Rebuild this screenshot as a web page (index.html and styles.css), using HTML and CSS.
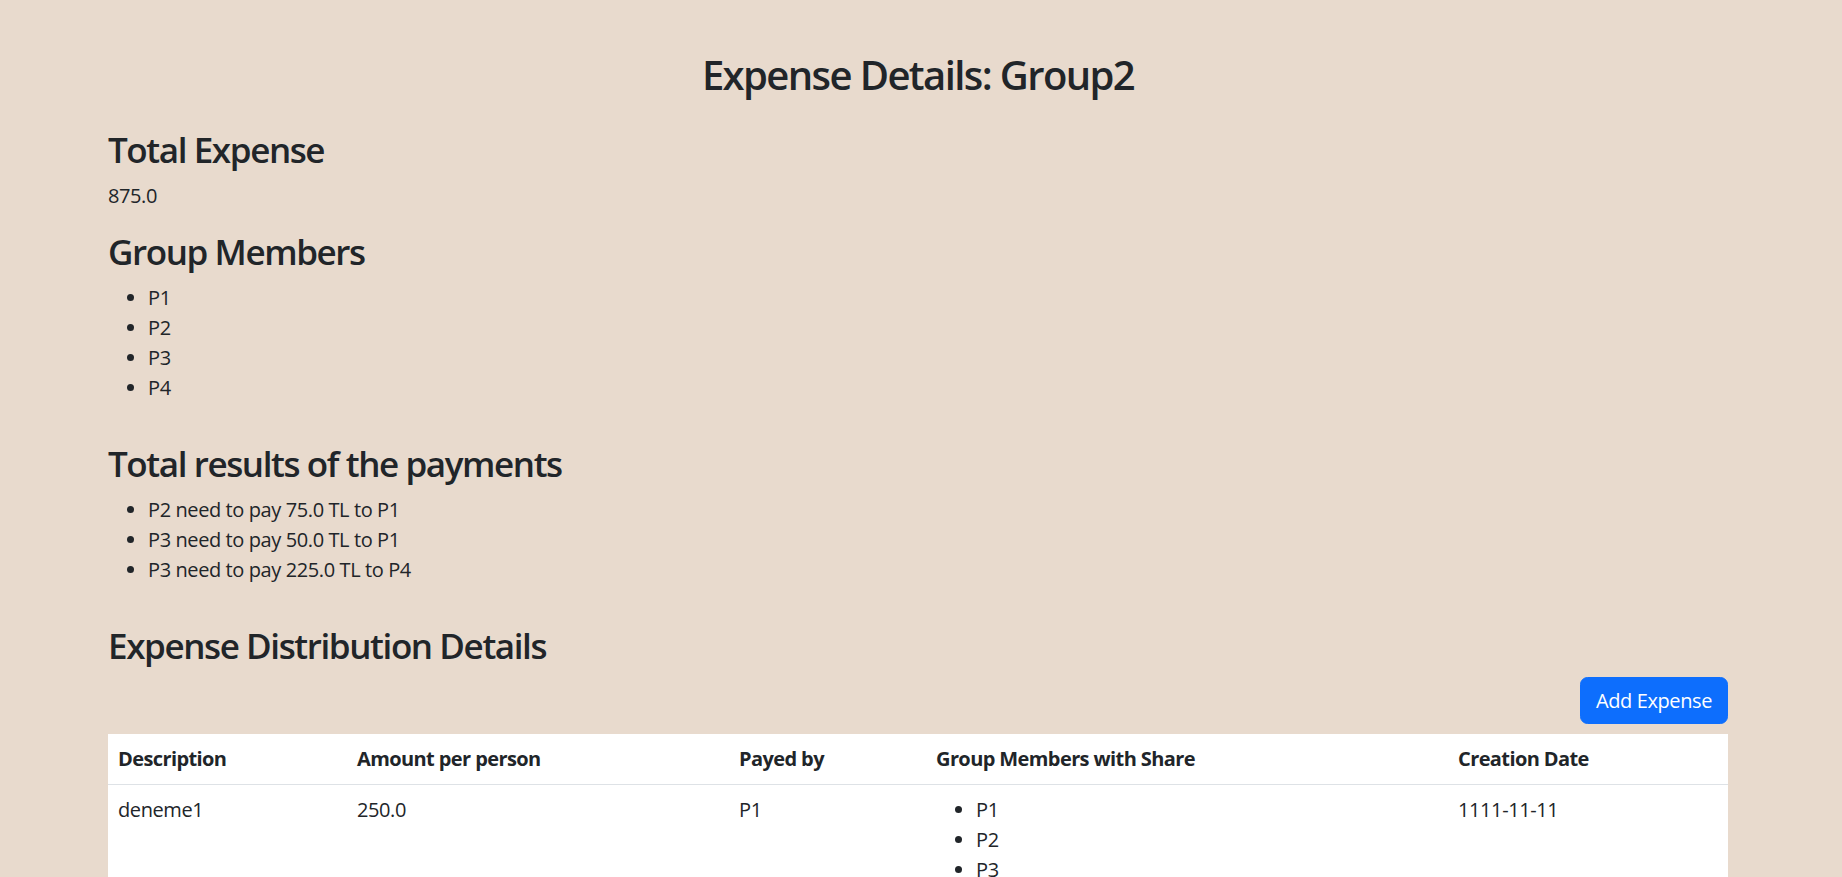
FILE: index.html
```html
<!DOCTYPE html>
<html lang="en">
<head>
<meta charset="utf-8">
<title>Expense Details: Group2</title>
<link rel="stylesheet" href="styles.css">
</head>
<body>
<div class="container">
  <h2 class="page-title">Expense Details: Group2</h2>

  <h3 class="section-title">Total Expense</h3>
  <p class="total">875.0</p>

  <h3 class="section-title">Group Members</h3>
  <ul class="list">
    <li>P1</li>
    <li>P2</li>
    <li>P3</li>
    <li>P4</li>
  </ul>

  <div class="section">
    <h3 class="section-title">Total results of the payments</h3>
    <ul class="list">
      <li>P2 need to pay 75.0 TL to P1</li>
      <li>P3 need to pay 50.0 TL to P1</li>
      <li>P3 need to pay 225.0 TL to P4</li>
    </ul>
  </div>

  <div class="section">
    <h3 class="section-title">Expense Distribution Details</h3>
    <div class="actions">
      <button class="btn-primary" type="button">Add Expense</button>
    </div>
    <table class="expense-table">
      <colgroup>
        <col class="col-desc">
        <col class="col-amount">
        <col class="col-payer">
        <col class="col-members">
        <col class="col-date">
      </colgroup>
      <thead>
        <tr>
          <th>Description</th>
          <th>Amount per person</th>
          <th>Payed by</th>
          <th>Group Members with Share</th>
          <th>Creation Date</th>
        </tr>
      </thead>
      <tbody>
        <tr>
          <td>deneme1</td>
          <td>250.0</td>
          <td>P1</td>
          <td>
            <ul class="list">
              <li>P1</li>
              <li>P2</li>
              <li>P3</li>
              <li>P4</li>
            </ul>
          </td>
          <td>1111-11-11</td>
        </tr>
      </tbody>
    </table>
  </div>
</div>
</body>
</html>
```

FILE: styles.css
```css
html, body {
  margin: 0;
  padding: 0;
}

body {
  background: #e8dacd;
  color: #212529;
  font-family: "Open Sans", "Noto Sans", "DejaVu Sans", sans-serif;
  font-size: 20px;
  line-height: 30px;
  letter-spacing: -0.02em;
}

.container {
  width: 1620px;
  margin-left: 108px;
  padding-top: 51px;
}

.page-title {
  margin: 0 0 30px;
  font-size: 40px;
  line-height: 48px;
  font-weight: 600;
  letter-spacing: -0.04em;
  text-align: center;
}

.section-title {
  margin: 0 0 10px;
  font-size: 35px;
  line-height: 42px;
  font-weight: 600;
  letter-spacing: -0.04em;
}

.total {
  margin: 0 0 20px;
}

.list {
  margin: 0 0 20px;
  padding-left: 40px;
}

.section {
  padding-top: 20px;
}

.actions {
  display: flex;
  justify-content: flex-end;
  margin-bottom: 10px;
}

.btn-primary {
  font-family: inherit;
  font-size: 20px;
  line-height: 30px;
  letter-spacing: -0.02em;
  color: #ffffff;
  background: #0d6efd;
  border: 1px solid #0d6efd;
  border-radius: 7.5px;
  padding: 7.5px 15px;
  cursor: pointer;
}

.expense-table {
  width: 1620px;
  table-layout: fixed;
  border-collapse: collapse;
  background: #ffffff;
}

.col-desc { width: 239px; }
.col-amount { width: 382px; }
.col-payer { width: 197px; }
.col-members { width: 522px; }
.col-date { width: 280px; }

.expense-table th,
.expense-table td {
  padding: 10px;
  text-align: left;
  vertical-align: top;
  border-bottom: 1px solid #dee2e6;
}

.expense-table th {
  font-weight: 700;
  letter-spacing: -0.03em;
}
```
